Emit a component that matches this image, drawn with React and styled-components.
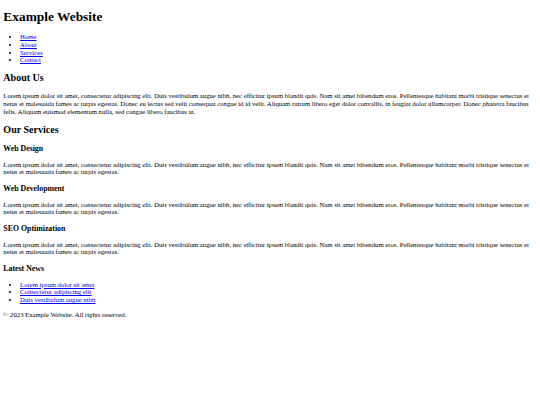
import React from 'react'
import styled, { createGlobalStyle } from 'styled-components'

const GlobalStyle = createGlobalStyle`
    html, body {
        background: #fff;
    }
    body {
        margin: 3.35px;
        font-family: "Liberation Serif", "Times New Roman", serif;
        font-size: 6.7px;
        line-height: 1.15;
        color: #000;
    }
`

const Title = styled.h1`
    font-size: 2em;
    margin: 0.42em 0 0.67em;
`

const SectionTitle = styled.h2`
    font-size: 1.5em;
    margin: 0.83em 0;
`

const SubTitle = styled.h3`
    font-size: 1.17em;
    margin: 1em 0;
`

const Text = styled.p`
    margin: 1em 0;
`

const LinkList = styled.ul`
    margin: 1em 0;
    padding-left: 16.75px;
`

const Link = styled.a`
    color: #0000ee;
    text-decoration: underline;
`

const lorem =
    'Lorem ipsum dolor sit amet, consectetur adipiscing elit. Duis vestibulum augue nibh, nec efficitur ipsum blandit quis. Nam sit amet bibendum eros. Pellentesque habitant morbi tristique senectus et netus et malesuada fames ac turpis egestas.'

const aboutText =
    lorem +
    ' Donec eu lectus sed velit consequat congue id id velit. Aliquam rutrum libero eget dolor convallis, in feugiat dolor ullamcorper. Donec pharetra faucibus felis. Aliquam euismod elementum nulla, sed congue libero faucibus ut.'

const navItems = ['Home', 'About', 'Services', 'Contact']
const services = ['Web Design', 'Web Development', 'SEO Optimization']
const news = ['Lorem ipsum dolor sit amet', 'Consectetur adipiscing elit', 'Duis vestibulum augue nibh']

function App() {
    return (
        <>
            <GlobalStyle />
            <header>
                <Title>Example Website</Title>
                <nav>
                    <LinkList>
                        {navItems.map((item) => (
                            <li key={item}>
                                <Link href="#">{item}</Link>
                            </li>
                        ))}
                    </LinkList>
                </nav>
            </header>
            <main>
                <section>
                    <SectionTitle>About Us</SectionTitle>
                    <Text>{aboutText}</Text>
                </section>
                <section>
                    <SectionTitle>Our Services</SectionTitle>
                    {services.map((name) => (
                        <div key={name}>
                            <SubTitle>{name}</SubTitle>
                            <Text>{lorem}</Text>
                        </div>
                    ))}
                </section>
                <aside>
                    <SubTitle>Latest News</SubTitle>
                    <LinkList>
                        {news.map((item) => (
                            <li key={item}>
                                <Link href="#">{item}</Link>
                            </li>
                        ))}
                    </LinkList>
                </aside>
            </main>
            <footer>
                <Text>&copy; 2023 Example Website. All rights reserved.</Text>
            </footer>
        </>
    )
}

export default App
